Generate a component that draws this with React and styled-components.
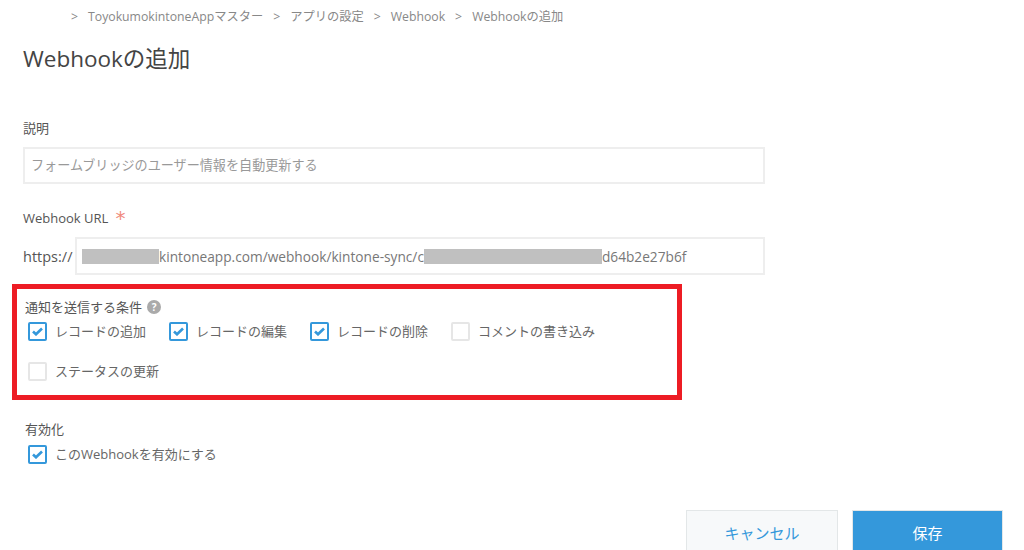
import React from 'react'
import styled, { createGlobalStyle } from 'styled-components'

const GlobalStyle = createGlobalStyle`
   html, body {
      margin: 0;
      padding: 0;
      background: #fff;
   }
   body {
      font-family: "Open Sans", "Noto Sans CJK JP", sans-serif;
      color: #666;
   }
`

const Page = styled.div`
   width: 1024px;
   height: 550px;
   padding-top: 8px;
   box-sizing: border-box;
   overflow: hidden;
`
const Breadcrumb = styled.div`
   display: flex;
   gap: 10px;
   height: 17px;
   margin-left: 71px;
   font-size: 12.25px;
   line-height: 17px;
   color: #888;
`
const Title = styled.h1`
   margin: 18px 0 0 23px;
   height: 32px;
   font-size: 22.5px;
   line-height: 32px;
   font-weight: 400;
   color: #444;
`
const Field = styled.div`
   margin: ${(props) => props.$top}px 0 0 ${(props) => props.$left || 23}px;
`
const Label = styled.div`
   display: flex;
   align-items: center;
   gap: ${(props) => props.$gap || 5}px;
   height: 18px;
   font-size: 13px;
   line-height: 18px;
   color: #555;
`
const Required = styled.span`
   color: #f08a7c;
   font-size: 20px;
   line-height: 18px;
   font-family: "DejaVu Sans", sans-serif;
`
const TextBox = styled.div`
   box-sizing: border-box;
   width: ${(props) => props.$width}px;
   height: ${(props) => props.$height}px;
   display: flex;
   align-items: center;
   padding: 0 0 ${(props) => props.$lift || 0}px ${(props) => props.$pad}px;
   margin-top: ${(props) => props.$top || 0}px;
   border: 2px solid #eeeeee;
   background: #fff;
   font-size: ${(props) => props.$size}px;
   color: ${(props) => props.$color};
   white-space: nowrap;
`
const UrlRow = styled.div`
   display: flex;
   align-items: center;
   margin-top: 10px;
   color: #555;
`
const UrlPrefix = styled.span`
   width: 52px;
   font-size: 14.5px;
`
const Redacted = styled.span`
   display: inline-block;
   width: ${(props) => props.$width}px;
   height: 15px;
   background: #c0c0c0;
`
const RedBox = styled.section`
   box-sizing: border-box;
   width: 670px;
   height: 116px;
   margin: 9px 0 0 12px;
   padding: 9px 8px 0 8px;
   border: 5px solid #ed1c24;
`
const HelpIcon = styled.span`
   display: inline-flex;
   align-items: center;
   justify-content: center;
   width: 14px;
   height: 14px;
   border-radius: 50%;
   background: #aaa;
   color: #fff;
   font-size: 10px;
   font-weight: 700;
   line-height: 14px;
`
const Checks = styled.div`
   display: flex;
   flex-wrap: wrap;
   row-gap: 20px;
   column-gap: 23px;
   margin: ${(props) => props.$top}px 0 0 3px;
`
const CheckRow = styled.label`
   display: flex;
   align-items: center;
   gap: 8px;
   height: 20px;
   font-size: 13px;
   line-height: 20px;
   color: #666;
   white-space: nowrap;
`
const Box = styled.span`
   box-sizing: border-box;
   display: flex;
   align-items: center;
   justify-content: center;
   width: 19px;
   height: 19px;
   border-radius: 2px;
   border: 2px solid ${(props) => (props.$on ? '#3498db' : '#e6e6e6')};
   background: #fff;
`
const Actions = styled.div`
   display: flex;
   gap: 14px;
   margin: 46px 0 0 686px;
`
const Button = styled.button`
   box-sizing: border-box;
   width: ${(props) => props.$width}px;
   height: 60px;
   padding: 0 0 16px 0;
   border: 1px solid #e3e7e8;
   background: ${(props) => (props.$primary ? '#3498db' : '#f7f9fa')};
   color: ${(props) => (props.$primary ? '#fff' : '#3498db')};
   font-family: inherit;
   font-size: 15px;
`

const Check = ({ on, children }) => (
   <CheckRow>
      <Box $on={on}>
         {on && (
            <svg width="11" height="9" viewBox="0 0 11 9">
               <path d="M1 4.5 L4 7.3 L10 1.5" fill="none" stroke="#3498db" strokeWidth="2.6" />
            </svg>
         )}
      </Box>
      {children}
   </CheckRow>
)

const crumbs = ['ToyokumokintoneAppマスター', 'アプリの設定', 'Webhook', 'Webhookの追加']

const App = () => {
   return (
      <Page>
         <GlobalStyle />
         <Breadcrumb>
            {crumbs.map((c) => (
               <React.Fragment key={c}>
                  <span>&gt;</span>
                  <span>{c}</span>
               </React.Fragment>
            ))}
         </Breadcrumb>
         <Title>Webhookの追加</Title>
         <Field $top={44}>
            <Label>説明</Label>
            <TextBox $width={742} $height={37} $top={10} $pad={6} $lift={3} $size={13.1} $color="#999">
               フォームブリッジのユーザー情報を自動更新する
            </TextBox>
         </Field>
         <Field $top={25}>
            <Label $gap={7}>
               Webhook URL <Required>*</Required>
            </Label>
            <UrlRow>
               <UrlPrefix>https://</UrlPrefix>
               <TextBox $width={690} $height={38} $pad={5} $size={13.7} $color="#777">
                  <Redacted $width={77} />
                  kintoneapp.com/webhook/kintone-sync/c
                  <Redacted $width={178} />
                  d64b2e27b6f
               </TextBox>
            </UrlRow>
         </Field>
         <RedBox>
            <Label>
               通知を送信する条件 <HelpIcon>?</HelpIcon>
            </Label>
            <Checks $top={5}>
               <Check on>レコードの追加</Check>
               <Check on>レコードの編集</Check>
               <Check on>レコードの削除</Check>
               <Check>コメントの書き込み</Check>
               <Check>ステータスの更新</Check>
            </Checks>
         </RedBox>
         <Field $top={20} $left={25}>
            <Label>有効化</Label>
            <Checks $top={6}>
               <Check on>このWebhookを有効にする</Check>
            </Checks>
         </Field>
         <Actions>
            <Button $width={152}>キャンセル</Button>
            <Button $width={151} $primary>保存</Button>
         </Actions>
      </Page>
   )
}

export default App
